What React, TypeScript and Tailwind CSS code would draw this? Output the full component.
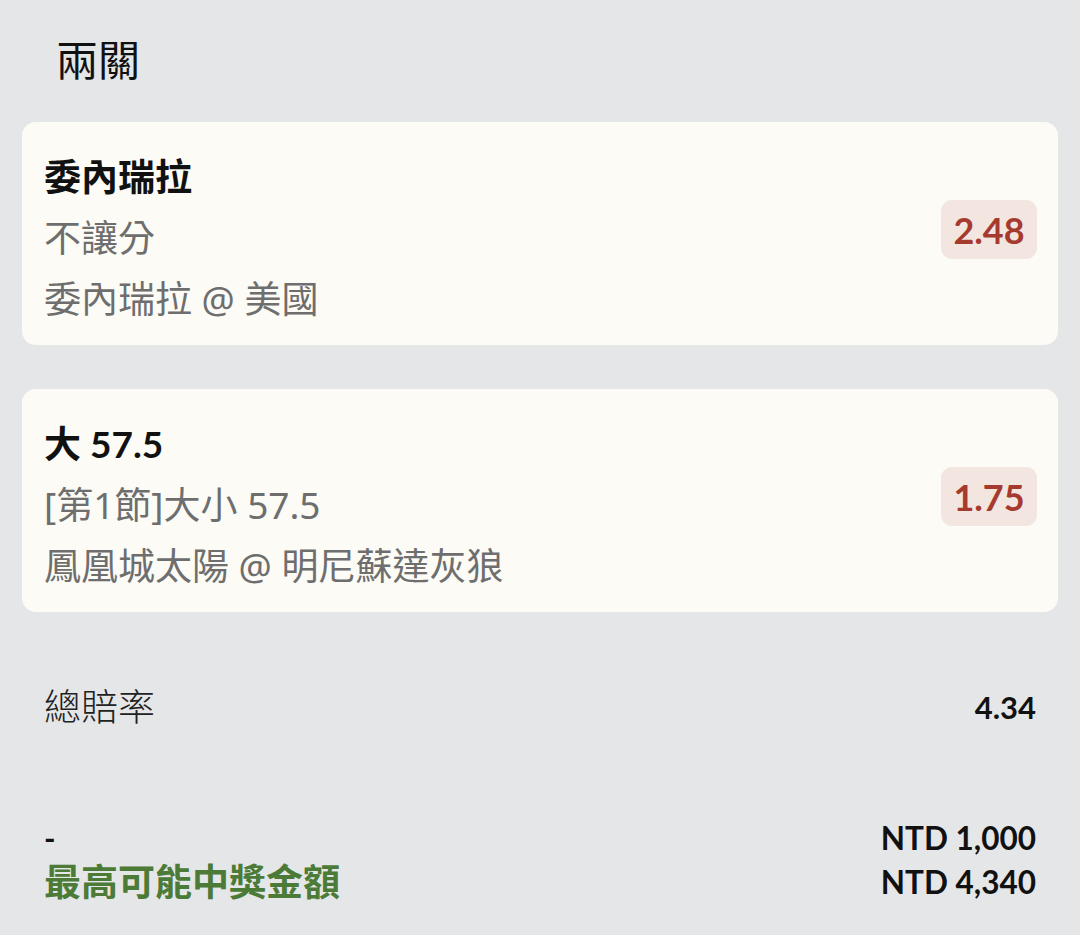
import React from 'react';

interface Leg {
  id: string;
  pick: string;
  market: string;
  match: string;
  odds: string;
}

const legs: Leg[] = [
  { id: '1', pick: '委內瑞拉', market: '不讓分', match: '委內瑞拉 @ 美國', odds: '2.48' },
  { id: '2', pick: '大 57.5', market: '[第1節]大小 57.5', match: '鳳凰城太陽 @ 明尼蘇達灰狼', odds: '1.75' },
];

const font = { fontFamily: 'Lato, "Noto Sans CJK TC", sans-serif' };
const sub = { fontFamily: '"Noto Sans", "Noto Sans CJK TC", sans-serif' };

function LegCard({ leg }: { leg: Leg }) {
  return (
    <div className="flex items-center justify-between rounded-[14px] bg-[#fcfbf5] pl-[22px] pr-[21px] pt-6 pb-4">
      <div className="flex flex-col text-[37px] leading-[61px]">
        <span className="font-bold text-[#111]">{leg.pick}</span>
        <span className="text-[#6e6e6e]" style={sub}>{leg.market}</span>
        <span className="text-[#6e6e6e]" style={sub}>{leg.match}</span>
      </div>
      <div className="mb-4 flex h-[59px] w-[96px] items-center justify-center rounded-[11px] bg-[#f3e6e0] text-[36px] font-bold text-[#a63a2f]">
        {leg.odds}
      </div>
    </div>
  );
}

export default function App() {
  return (
    <div className="min-h-[935px] w-[1080px] bg-[#e5e6e8] text-[#111]" style={font}>
      <div className="pl-[56px] pt-[28px] pb-[20px] text-[42px] leading-[64px]">兩關</div>

      <div className="flex flex-col gap-[44px] px-[22px] pt-[10px]">
        {legs.map((leg) => (
          <LegCard key={leg.id} leg={leg} />
        ))}
      </div>

      {/* Summary */}
      <div className="flex items-center justify-between px-[44px] pt-[64px]">
        <span className="text-[37px] font-light leading-[62px] text-[#222]">總賠率</span>
        <span className="text-[31px] font-bold">4.34</span>
      </div>

      <div className="flex items-end justify-between px-[44px] pt-[78px]">
        <div className="flex flex-col">
          <span className="text-[31px] font-bold leading-[44px]">-</span>
          <span className="text-[37px] font-bold leading-[44px] text-[#4b7b36]">最高可能中獎金額</span>
        </div>
        <div className="flex flex-col items-end text-[31.5px] font-bold leading-[44px]">
          <span>NTD 1,000</span>
          <span>NTD 4,340</span>
        </div>
      </div>
    </div>
  );
}
